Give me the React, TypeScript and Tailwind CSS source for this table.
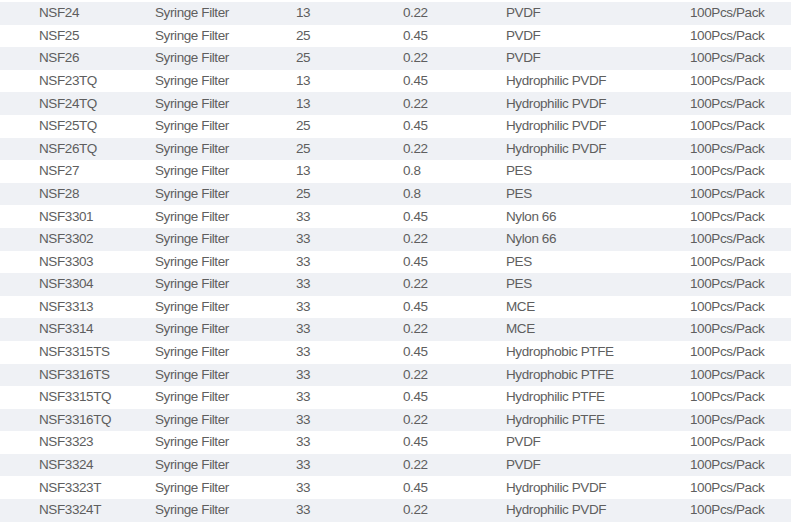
import React from "react";

const rows: [string, string, string, string][] = [
  ["NSF24", "13", "0.22", "PVDF"],
  ["NSF25", "25", "0.45", "PVDF"],
  ["NSF26", "25", "0.22", "PVDF"],
  ["NSF23TQ", "13", "0.45", "Hydrophilic PVDF"],
  ["NSF24TQ", "13", "0.22", "Hydrophilic PVDF"],
  ["NSF25TQ", "25", "0.45", "Hydrophilic PVDF"],
  ["NSF26TQ", "25", "0.22", "Hydrophilic PVDF"],
  ["NSF27", "13", "0.8", "PES"],
  ["NSF28", "25", "0.8", "PES"],
  ["NSF3301", "33", "0.45", "Nylon 66"],
  ["NSF3302", "33", "0.22", "Nylon 66"],
  ["NSF3303", "33", "0.45", "PES"],
  ["NSF3304", "33", "0.22", "PES"],
  ["NSF3313", "33", "0.45", "MCE"],
  ["NSF3314", "33", "0.22", "MCE"],
  ["NSF3315TS", "33", "0.45", "Hydrophobic PTFE"],
  ["NSF3316TS", "33", "0.22", "Hydrophobic PTFE"],
  ["NSF3315TQ", "33", "0.45", "Hydrophilic PTFE"],
  ["NSF3316TQ", "33", "0.22", "Hydrophilic PTFE"],
  ["NSF3323", "33", "0.45", "PVDF"],
  ["NSF3324", "33", "0.22", "PVDF"],
  ["NSF3323T", "33", "0.45", "Hydrophilic PVDF"],
  ["NSF3324T", "33", "0.22", "Hydrophilic PVDF"],
];

export default function App() {
  return (
    <div className="w-[800px] h-[525px] bg-white pt-[2px] overflow-hidden font-['Liberation_Sans',Arial,sans-serif] text-[13.5px] text-[#5e5e5e] tracking-[-0.4px]">
      <div className="w-[791px] flex flex-col">
        {rows.map((r, i) => (
          <div
            key={r[0]}
            className={`h-[22.6px] grid grid-cols-[116px_141px_107px_103px_184px_1fr] items-center pl-[39px] ${
              i % 2 === 0 ? "bg-[#eff1f5]" : "bg-white"
            }`}
          >
            <span>{r[0]}</span>
            <span>Syringe Filter</span>
            <span>{r[1]}</span>
            <span>{r[2]}</span>
            <span>{r[3]}</span>
            <span>100Pcs/Pack</span>
          </div>
        ))}
      </div>
    </div>
  );
}
